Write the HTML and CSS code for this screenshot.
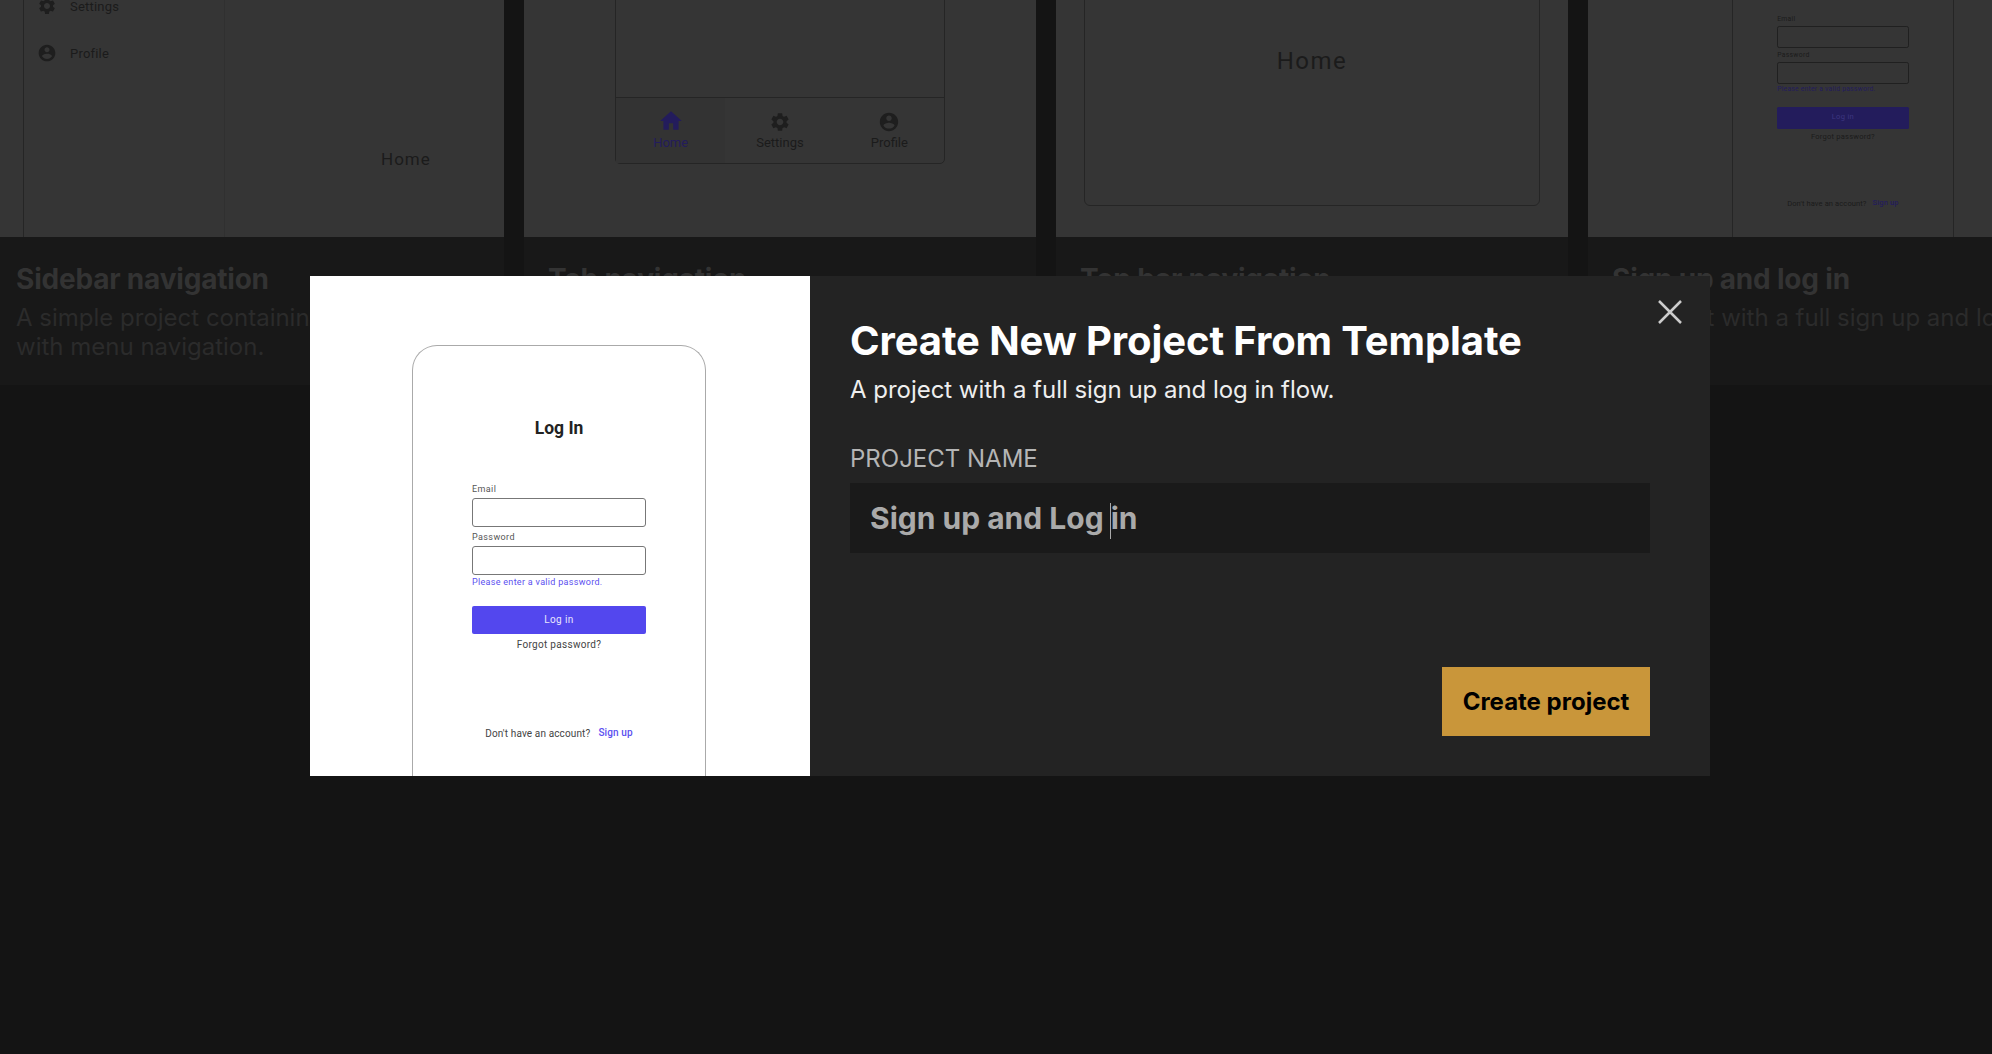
FILE: index.html
```html
<!DOCTYPE html>
<html lang="en">
<head>
    <meta charset="UTF-8">
    <meta name="viewport" content="width=device-width, initial-scale=1.0">
    <title>Create New Project From Template</title>
    <link rel="stylesheet" href="styles.css">
</head>
<body>

    <svg class="icon-defs" width="0" height="0">
        <symbol id="i-home" viewBox="0 0 24 24"><path d="M10 20v-6h4v6h5v-8h3L12 3 2 12h3v8z"/></symbol>
        <symbol id="i-gear" viewBox="0 0 24 24"><path d="M19.14 12.94c.04-.3.06-.61.06-.94 0-.32-.02-.64-.07-.94l2.03-1.58c.18-.14.23-.41.12-.61l-1.92-3.32c-.12-.22-.37-.29-.59-.22l-2.39.96c-.5-.38-1.03-.7-1.62-.94l-.36-2.54c-.04-.24-.24-.41-.48-.41h-3.84c-.24 0-.43.17-.47.41l-.36 2.54c-.59.24-1.13.57-1.62.94l-2.39-.96c-.22-.08-.47 0-.59.22L2.74 8.87c-.12.21-.08.47.12.61l2.03 1.58c-.05.3-.09.63-.09.94s.02.64.07.94l-2.03 1.58c-.18.14-.23.41-.12.61l1.92 3.32c.12.22.37.29.59.22l2.39-.96c.5.38 1.03.7 1.62.94l.36 2.54c.05.24.24.41.48.41h3.84c.24 0 .44-.17.47-.41l.36-2.54c.59-.24 1.13-.56 1.62-.94l2.39.96c.22.08.47 0 .59-.22l1.92-3.32c.12-.22.07-.47-.12-.61l-2.01-1.58zM12 15.6c-1.98 0-3.6-1.62-3.6-3.6s1.62-3.6 3.6-3.6 3.6 1.62 3.6 3.6-1.62 3.6-3.6 3.6z"/></symbol>
        <symbol id="i-user" viewBox="0 0 24 24"><path d="M12 2C6.48 2 2 6.48 2 12s4.48 10 10 10 10-4.48 10-10S17.52 2 12 2zm0 3c1.66 0 3 1.34 3 3s-1.34 3-3 3-3-1.34-3-3 1.34-3 3-3zm0 14.2c-2.5 0-4.71-1.28-6-3.22.03-1.99 4-3.08 6-3.08 1.99 0 5.97 1.09 6 3.08-1.29 1.94-3.5 3.22-6 3.22z"/></symbol>
    </svg>

    <!-- Template cards behind the dialog -->
    <div class="cards">

        <div class="card">
            <div class="thumb thumb-sidebar">
                <div class="side">
                    <div class="side-item"><svg class="side-icon"><use href="#i-gear"/></svg>Settings</div>
                    <div class="side-item"><svg class="side-icon"><use href="#i-user"/></svg>Profile</div>
                </div>
                <div class="side-main">Home</div>
            </div>
            <div class="card-text">
                <h3>Sidebar navigation</h3>
                <p>A simple project containing two screens with menu navigation.</p>
            </div>
        </div>

        <div class="card">
            <div class="thumb">
                <div class="tab-frame">
                    <div class="tab-content"></div>
                    <div class="tabs">
                        <div class="tab tab-active"><svg class="tab-icon tab-icon-home"><use href="#i-home"/></svg>Home</div>
                        <div class="tab"><svg class="tab-icon"><use href="#i-gear"/></svg>Settings</div>
                        <div class="tab"><svg class="tab-icon"><use href="#i-user"/></svg>Profile</div>
                    </div>
                </div>
            </div>
            <div class="card-text">
                <h3>Tab navigation</h3>
                <p>A simple project with tab navigation.</p>
            </div>
        </div>

        <div class="card">
            <div class="thumb">
                <div class="top-frame">Home</div>
            </div>
            <div class="card-text">
                <h3>Top bar navigation</h3>
                <p>A simple project with top bar navigation.</p>
            </div>
        </div>

        <div class="card">
            <div class="thumb">
                <div class="phone phone-dim">
                    <div class="phone-title">Log In</div>
                    <div class="form">
                        <div class="field-label">Email</div>
                        <div class="field"></div>
                        <div class="field-label field-label-next">Password</div>
                        <div class="field"></div>
                        <div class="field-error">Please enter a valid password.</div>
                        <div class="login-btn">Log in</div>
                        <div class="forgot">Forgot password?</div>
                    </div>
                    <div class="signup"><span>Don't have an account?</span><span class="signup-link">Sign up</span></div>
                </div>
            </div>
            <div class="card-text">
                <h3>Sign up and log in</h3>
                <p>A project with a full sign up and log in flow.</p>
            </div>
        </div>

    </div>

    <!-- Dialog -->
    <div class="modal">
        <div class="preview">
            <div class="phone">
                <div class="phone-title">Log In</div>
                <div class="form">
                    <div class="field-label">Email</div>
                    <div class="field"></div>
                    <div class="field-label field-label-next">Password</div>
                    <div class="field"></div>
                    <div class="field-error">Please enter a valid password.</div>
                    <div class="login-btn">Log in</div>
                    <div class="forgot">Forgot password?</div>
                </div>
                <div class="signup"><span>Don't have an account?</span><span class="signup-link">Sign up</span></div>
            </div>
        </div>
        <div class="modal-body">
            <h1>Create New Project From Template</h1>
            <p class="modal-sub">A project with a full sign up and log in flow.</p>
            <div class="name-label">PROJECT NAME</div>
            <div class="name-input">Sign up and Log <span class="caret"></span>in</div>
            <button class="create-btn">Create project</button>
            <svg class="close" width="24" height="24" viewBox="0 0 24 24"><path d="M1 1l22 22M23 1L1 23"/></svg>
        </div>
    </div>

</body>
</html>
```

FILE: styles.css
```css
/* General */
html, body {
    margin: 0;
    height: 100%;
    overflow: hidden;
}
body {
    background-color: #141414;
    font-family: Inter, "Liberation Sans", sans-serif;
    position: relative;
}
.icon-defs {
    position: absolute;
}

/* Cards behind the dialog */
.cards {
    display: flex;
    gap: 20px;
    margin-left: -8px;
    width: 2108px;
}
.card {
    flex: 0 0 512px;
    background-color: #181818;
    height: 385px;
}
.thumb {
    height: 237px;
    background-color: #353535;
    overflow: hidden;
    display: flex;
    justify-content: center;
    font-family: Roboto, sans-serif;
    color: #1b1b1b;
}
.card-text {
    padding: 22px 24px 0;
}
.card-text h3 {
    margin: 0;
    font-size: 28px;
    line-height: 40px;
    font-weight: 700;
    letter-spacing: -0.2px;
    color: #333;
}
.card-text p {
    margin: 4px 0 0;
    font-size: 24px;
    line-height: 29px;
    color: #2b2b2b;
}

/* Sidebar thumbnail */
.thumb-sidebar {
    justify-content: flex-start;
    padding-left: 31px;
}
.side {
    width: 187px;
    flex: none;
    border-left: 1px solid #252525;
    border-right: 1px solid #303030;
    margin-top: -6px;
    padding-left: 13px;
    font-size: 13px;
    letter-spacing: 0.2px;
}
.side-item {
    display: flex;
    align-items: center;
    height: 24px;
    margin-bottom: 23px;
}
.side-icon {
    width: 20px;
    height: 20px;
    margin-right: 13px;
    fill: #1e1e1e;
}
.side-main {
    flex: 1;
    padding: 148px 0 0 156px;
    font-size: 17px;
    line-height: 22px;
    letter-spacing: 1px;
}

/* Tab thumbnail */
.tab-frame {
    width: 330px;
    height: 174px;
    margin-top: -10px;
    box-sizing: border-box;
    border: 1px solid #252525;
    border-radius: 0 0 5px 5px;
    display: flex;
    flex-direction: column;
}
.tab-content {
    flex: 1;
}
.tabs {
    height: 65px;
    border-top: 1px solid #252525;
    display: flex;
}
.tab {
    flex: 1;
    display: flex;
    flex-direction: column;
    align-items: center;
    padding-top: 13px;
    font-size: 13px;
    line-height: 16px;
    box-sizing: border-box;
}
.tab-active {
    background-color: #333;
    color: #231c5c;
}
.tab-icon {
    width: 22px;
    height: 22px;
    margin-bottom: 2px;
    fill: #1e1e1e;
}
.tab-icon-home {
    width: 26px;
    height: 26px;
    margin: -3px 0 1px;
    fill: #231c5c;
}

/* Top bar thumbnail */
.top-frame {
    width: 456px;
    height: 216px;
    margin-top: -10px;
    box-sizing: border-box;
    padding-top: 54px;
    border: 1px solid #252525;
    border-radius: 0 0 6px 6px;
    text-align: center;
    font-size: 24px;
    line-height: 32px;
    letter-spacing: 1.5px;
}

/* Phone mock, used in the dialog and in the fourth card */
.phone {
    box-sizing: border-box;
    width: 294px;
    height: 431px;
    padding-top: 71px;
    border: 1.5px solid #aaa;
    border-bottom: none;
    border-radius: 25px 25px 0 0;
    font-family: Roboto, sans-serif;
    color: #222;
    text-align: center;
}
.phone-title {
    font-size: 17.5px;
    line-height: 22px;
    font-weight: 700;
}
.form {
    width: 174px;
    margin: 44px auto 0;
    text-align: left;
}
.field-label {
    font-size: 9px;
    line-height: 12px;
    letter-spacing: 0.4px;
    color: #555;
}
.field-label-next {
    margin-top: 4px;
}
.field {
    box-sizing: border-box;
    height: 29px;
    margin-top: 3px;
    border: 1px solid #777;
    border-radius: 3px;
}
.field-error {
    margin-top: 1px;
    font-size: 9px;
    line-height: 12px;
    letter-spacing: 0.3px;
    color: #5b4ff0;
}
.login-btn {
    height: 28px;
    margin-top: 18px;
    background-color: #5347ee;
    border-radius: 2px;
    color: #e8e6fd;
    font-size: 10px;
    line-height: 27px;
    letter-spacing: 0.4px;
    text-align: center;
}
.forgot {
    margin-top: 4px;
    font-size: 10px;
    line-height: 14px;
    letter-spacing: 0.3px;
    text-align: center;
    color: #444;
}
.signup {
    display: flex;
    justify-content: center;
    gap: 8px;
    margin-top: 75px;
    font-size: 10px;
    line-height: 14px;
    letter-spacing: 0.13px;
    color: #444;
}
.signup-link {
    margin-top: -1px;
    color: #5b4ff0;
    font-weight: 500;
}
.phone-dim {
    zoom: 0.755;
    margin-top: -119px;
    margin-right: 3px;
    height: 433px;
    border: 1px solid #252525;
    border-bottom: none;
    color: #1b1b1b;
    flex: none;
}
.phone-dim .phone-title {
    visibility: hidden;
}
.phone-dim .field-label,
.phone-dim .forgot,
.phone-dim .signup {
    color: #1b1b1b;
}
.phone-dim .field {
    border-color: #202020;
}
.phone-dim .field-error,
.phone-dim .signup-link {
    color: #231c5c;
}
.phone-dim .login-btn {
    background-color: #231c5c;
    color: #3d3680;
}

/* Dialog */
.modal {
    position: absolute;
    left: 310px;
    top: 276px;
    width: 1400px;
    height: 500px;
    display: flex;
    background-color: #232323;
}
.preview {
    flex: 0 0 500px;
    background-color: #fff;
    padding: 69px 2px 0 0;
    box-sizing: border-box;
    display: flex;
    justify-content: center;
    overflow: hidden;
}
.modal-body {
    flex: 1;
    position: relative;
    display: flex;
    flex-direction: column;
    align-items: flex-start;
    padding: 41px 60px 40px 40px;
}
.modal-body h1 {
    margin: 0;
    font-size: 40px;
    line-height: 48px;
    font-weight: 700;
    letter-spacing: -0.1px;
    color: #fff;
}
.modal-sub {
    margin: 10px 0 0;
    font-size: 24px;
    line-height: 30px;
    letter-spacing: -0.03px;
    color: #eee;
}
.name-label {
    margin-top: 39px;
    font-size: 24px;
    line-height: 30px;
    color: #b5b5b5;
}
.name-input {
    align-self: stretch;
    height: 70px;
    margin-top: 9px;
    padding-left: 20px;
    background-color: #1a1a1a;
    color: #aaa;
    font-size: 30px;
    font-weight: 700;
    line-height: 70px;
}
.caret {
    display: inline-block;
    width: 1px;
    height: 36px;
    margin: 0 0 0 -1px;
    background-color: #aaa;
    vertical-align: middle;
}
.create-btn {
    margin: auto 0 0 auto;
    width: 208px;
    height: 69px;
    border: none;
    background-color: #c9963a;
    color: #000;
    font-family: inherit;
    font-size: 24px;
    font-weight: 700;
}
.close {
    position: absolute;
    top: 24px;
    right: 28px;
    fill: none;
    stroke: #ccc;
    stroke-width: 2.5;
}
```
